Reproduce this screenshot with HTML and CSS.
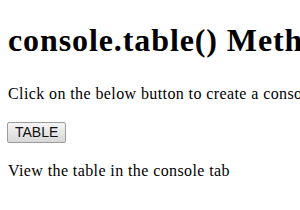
FILE: index.html
```html
<!DOCTYPE html>
<html lang="en">
<head>
  <meta charset="UTF-8" />
  <title>console.table() Method</title>
  <link rel="stylesheet" href="styles.css">
</head>
<body>
  <div class="page">
    <h1>console.table() Method</h1>
    <p class="intro">Click on the below button to create a console table</p>
    <div class="actions">
      <button class="btn" id="table-btn">TABLE</button>
    </div>
    <p>View the table in the console tab</p>
  </div>

  <script>
    document.getElementById("table-btn").addEventListener("click", () => {
      console.table([{ a: 1, b: "Y" }, { a: "Z", b: 2 }]);
    });
  </script>
</body>
</html>
```

FILE: styles.css
```css
body {
  margin: 0;
  background: #fff;
  color: #000;
  font-family: "Liberation Serif", "Times New Roman", serif;
}

.page {
  padding: 1px 0 0 8px;
  overflow: hidden;
  white-space: nowrap;
}

h1 {
  font-size: 32px;
  line-height: 37px;
  letter-spacing: 0.9px;
  margin: 21px 0 26px;
}

p {
  font-size: 16px;
  line-height: 18px;
  letter-spacing: 0.4px;
  margin: 0;
}

.actions {
  display: flex;
  margin: 19px 0 19px -1px;
}

.btn {
  font-family: "Liberation Sans", Arial, sans-serif;
  font-size: 14px;
  line-height: 15px;
  color: #111;
  padding: 2px 7px;
  border: 1px solid #9c9c9c;
  border-radius: 2px;
  background: linear-gradient(#f4f4f4, #e6e6e6 50%, #d8d8d8);
}
```
